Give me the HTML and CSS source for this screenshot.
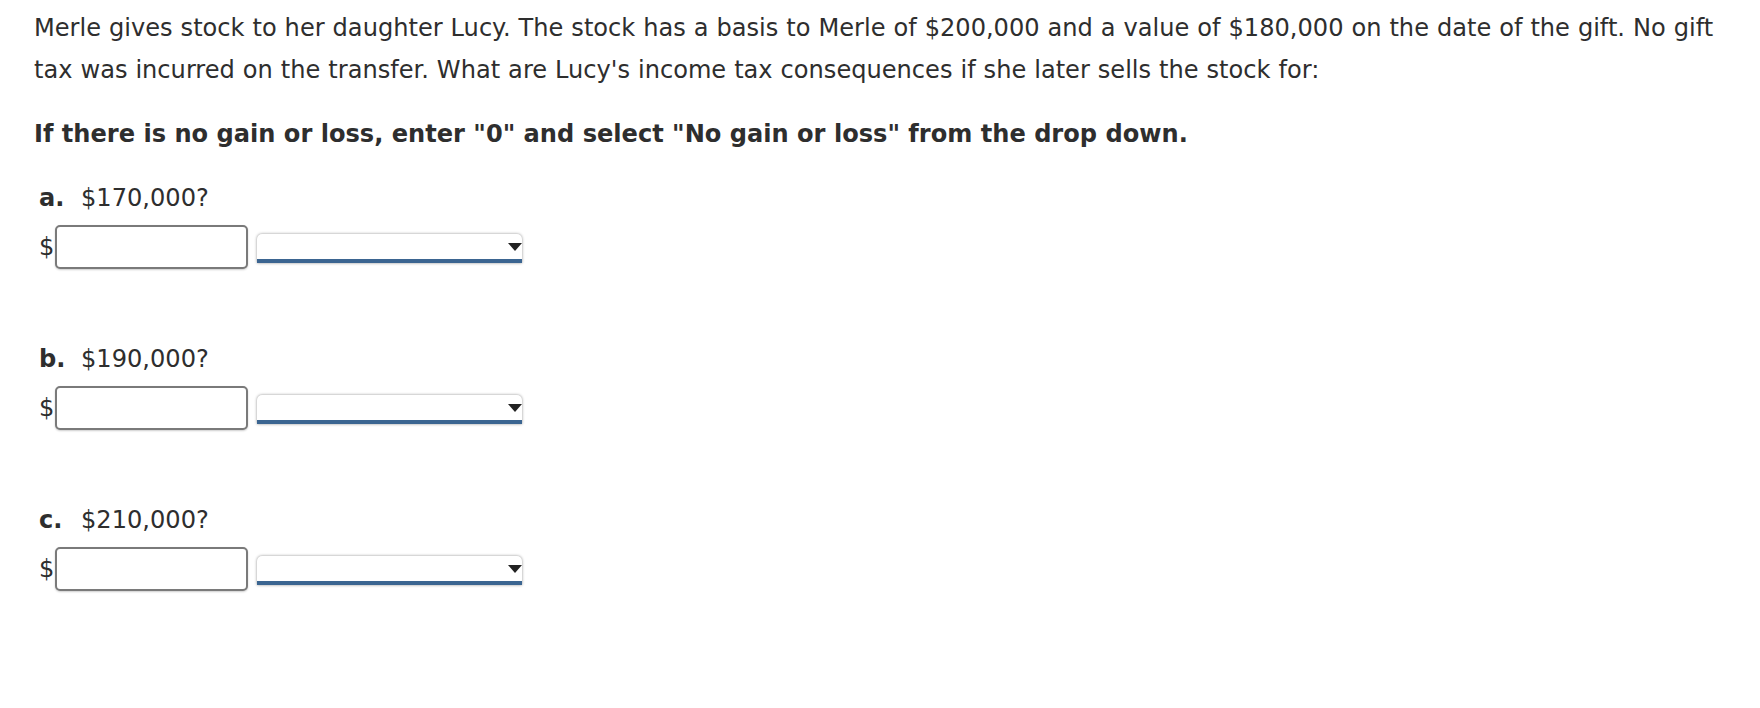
FILE: index.html
```html
<!DOCTYPE html>
<html>
<head>
<meta charset="utf-8">
<link rel="stylesheet" href="styles.css">
</head>
<body>
<div class="page">
  <p class="intro">Merle gives stock to her daughter Lucy. The stock has a basis to Merle of $200,000 and a value of $180,000 on the date of the gift. No gift tax was incurred on the transfer. What are Lucy's income tax consequences if she later sells the stock for:</p>
  <p class="note">If there is no gain or loss, enter "0" and select "No gain or loss" from the drop down.</p>

  <div class="item">
    <div class="label"><span class="letter">a.</span>$170,000?</div>
    <div class="answer">
      <span class="cur">$</span>
      <input class="amount" type="text">
      <span class="dd"><span class="arrow"></span></span>
    </div>
  </div>

  <div class="item">
    <div class="label"><span class="letter">b.</span>$190,000?</div>
    <div class="answer">
      <span class="cur">$</span>
      <input class="amount" type="text">
      <span class="dd"><span class="arrow"></span></span>
    </div>
  </div>

  <div class="item">
    <div class="label"><span class="letter">c.</span>$210,000?</div>
    <div class="answer">
      <span class="cur">$</span>
      <input class="amount" type="text">
      <span class="dd"><span class="arrow"></span></span>
    </div>
  </div>
</div>
</body>
</html>
```

FILE: styles.css
```css
html, body {
  margin: 0;
  padding: 0;
  background: #fff;
}
.page {
  padding: 7px 0 0 34px;
  width: 1700px;
  font-family: "DejaVu Sans", Verdana, sans-serif;
  font-size: 24.1px;
  line-height: 42px;
  color: #2e2e2e;
}
.intro {
  margin: 0;
  word-spacing: 0.3px;
}
.note {
  margin: 22px 0 22px 0;
  font-weight: bold;
}
.item {
  padding-left: 5px;
  height: 161px;
}
.label {
  display: flex;
}
.letter {
  font-weight: bold;
  width: 42px;
}
.answer {
  margin-top: 6px;
  display: flex;
  align-items: center;
}
.cur {
  width: 16px;
  line-height: 43px;
}
.amount {
  box-sizing: border-box;
  width: 193px;
  height: 44px;
  margin: 0;
  border: 2px solid #7a7a7a;
  border-radius: 5px;
  box-shadow: 0 1px 2px rgba(0,0,0,0.2);
  background: #fff;
  padding: 0 6px;
  font: inherit;
}
.dd {
  position: relative;
  box-sizing: border-box;
  display: block;
  width: 265px;
  height: 29px;
  margin-left: 9px;
  margin-top: 2px;
  background: #fff;
  border-bottom: 4px solid #3b6591;
  border-radius: 5px 5px 0 0;
  box-shadow: 0 0 3px rgba(0,0,0,0.45);
}
.arrow {
  position: absolute;
  right: 0;
  top: 9px;
  width: 0;
  height: 0;
  border-left: 7px solid transparent;
  border-right: 7px solid transparent;
  border-top: 8px solid #222;
}
```
